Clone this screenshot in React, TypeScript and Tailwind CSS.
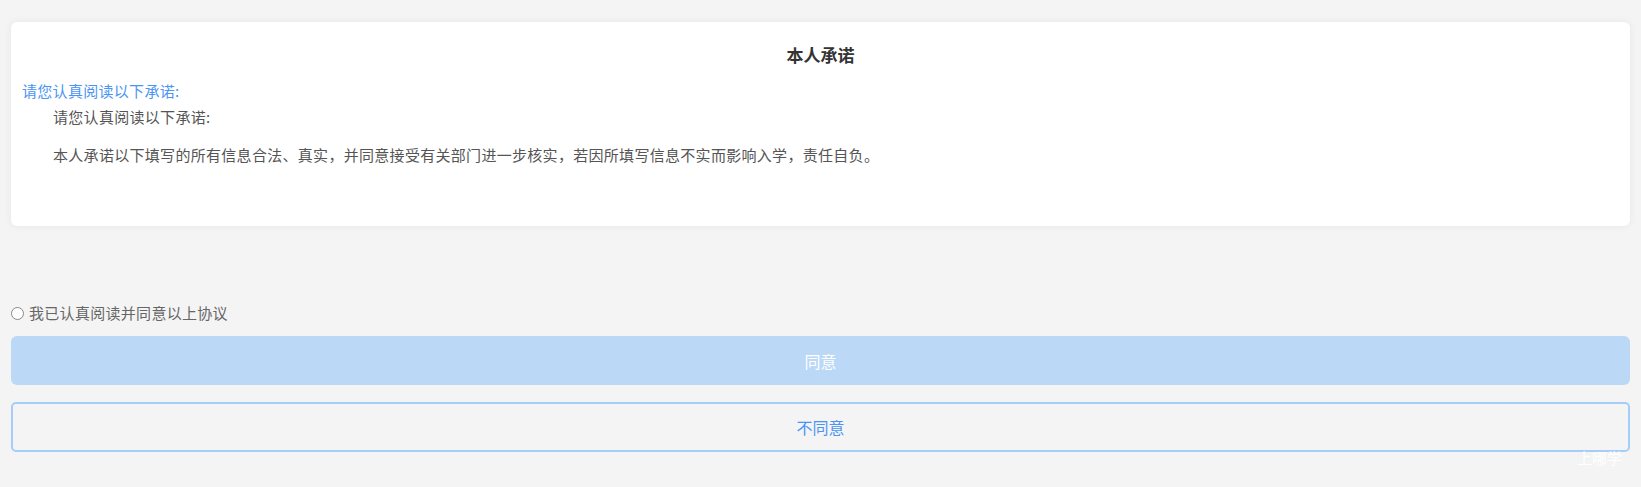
export default function App() {
  return (
    <div
      className="relative h-[487px] w-full overflow-hidden bg-[#f4f4f4] px-[11px] pt-[22px]"
      style={{ fontFamily: '"Noto Sans CJK SC", "Noto Sans", sans-serif' }}
    >
      <div className="h-[204px] rounded-[6px] bg-white pt-[21px] shadow-[0_0_8px_rgba(0,0,0,0.06)]">
        <h2 className="text-center text-[17px] font-bold leading-[24px] text-[#333]">本人承诺</h2>
        <p className="mt-[13px] pl-[11px] text-[15px] leading-[22px] tracking-[0.3px] text-[#4a94f5]">请您认真阅读以下承诺:</p>
        <div className="pl-[42px] text-[15px] leading-[22px] tracking-[0.3px] text-[#555]">
          <p className="mt-[4px]">请您认真阅读以下承诺:</p>
          <p className="mt-[16px]">
            本人承诺以下填写的所有信息合法、真实，并同意接受有关部门进一步核实，若因所填写信息不实而影响入学，责任自负。
          </p>
        </div>
      </div>

      <label className="mt-[76px] flex items-center gap-[5px] text-[15px] leading-[22px] tracking-[0.3px] text-[#666]">
        <span className="h-[13px] w-[13px] rounded-full border border-[#888] bg-white" />
        我已认真阅读并同意以上协议
      </label>

      <button
        disabled
        className="mt-[12px] flex h-[49px] w-full items-center justify-center rounded-[6px] bg-[#bbd8f7] text-[16px] text-white"
      >
        同意
      </button>
      <button className="mt-[17px] flex h-[50px] w-full items-center justify-center rounded-[5px] border-2 border-[#a6cdf7] bg-[#f4f4f4] text-[16px] text-[#4a94f5]">
        不同意
      </button>

      <span className="absolute bottom-[18px] right-[19px] text-[15px] text-white">上哪学</span>
    </div>
  )
}
